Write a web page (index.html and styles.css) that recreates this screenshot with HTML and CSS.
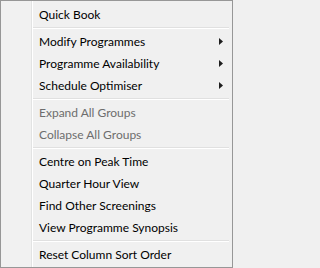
FILE: index.html
```html
<!DOCTYPE html>
<html>
<head>
<meta charset="utf-8">
<link rel="stylesheet" href="styles.css">
</head>
<body>
<div class="menu">
  <div class="item">Quick Book</div>
  <div class="sep"></div>
  <div class="item">Modify Programmes<svg class="arrow" width="4" height="7" viewBox="0 0 4 7"><path d="M0 0 L4 3.5 L0 7 Z" fill="#1e1e1e"/></svg></div>
  <div class="item">Programme Availability<svg class="arrow" width="4" height="7" viewBox="0 0 4 7"><path d="M0 0 L4 3.5 L0 7 Z" fill="#1e1e1e"/></svg></div>
  <div class="item">Schedule Optimiser<svg class="arrow" width="4" height="7" viewBox="0 0 4 7"><path d="M0 0 L4 3.5 L0 7 Z" fill="#1e1e1e"/></svg></div>
  <div class="sep"></div>
  <div class="item disabled">Expand All Groups</div>
  <div class="item disabled">Collapse All Groups</div>
  <div class="sep"></div>
  <div class="item">Centre on Peak Time</div>
  <div class="item">Quarter Hour View</div>
  <div class="item">Find Other Screenings</div>
  <div class="item">View Programme Synopsis</div>
  <div class="sep"></div>
  <div class="item">Reset Column Sort Order</div>
</div>
</body>
</html>
```
FILE: styles.css
```css
html, body {
  margin: 0;
  padding: 0;
  background: #f0f0f0;
}
.menu {
  box-sizing: border-box;
  width: 233px;
  height: 268px;
  border: 1px solid #979797;
  padding: 2px 0 2px 0;
  background: linear-gradient(to right, #f1f1f1 0, #f1f1f1 30px, #e2e3e3 30px, #e2e3e3 31px, #ffffff 31px, #ffffff 32px, #f0f0f0 32px);
  font-family: "Lato", "Noto Sans", sans-serif;
  font-size: 12px;
  color: #000;
}
.item {
  display: flex;
  align-items: center;
  height: 22px;
  padding: 0 9px 0 38px;
  white-space: nowrap;
}
.item.disabled {
  color: #6d6d6d;
}
.arrow {
  margin-left: auto;
  display: block;
}
.sep {
  margin: 2px 3px 1px 32px;
  height: 0;
  border-top: 1px solid #e0e0e0;
  border-bottom: 1px solid #ffffff;
}
```
